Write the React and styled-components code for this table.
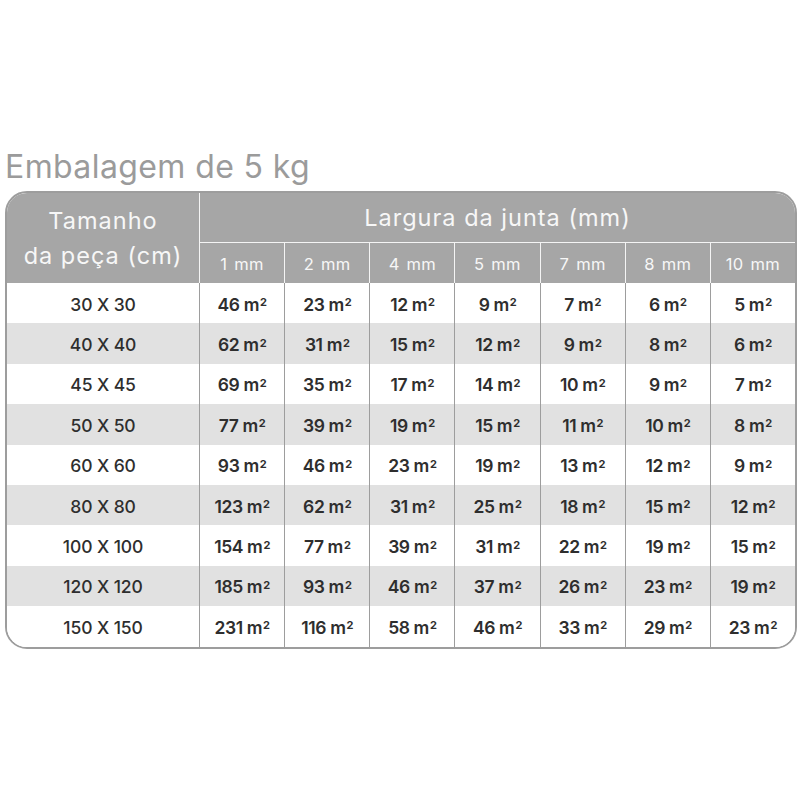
import React from "react";
import styled, { createGlobalStyle } from "styled-components";

const widths = ["1 mm", "2 mm", "4 mm", "5 mm", "7 mm", "8 mm", "10 mm"];

const rows = [
  ["30 X 30", [46, 23, 12, 9, 7, 6, 5]],
  ["40 X 40", [62, 31, 15, 12, 9, 8, 6]],
  ["45 X 45", [69, 35, 17, 14, 10, 9, 7]],
  ["50 X 50", [77, 39, 19, 15, 11, 10, 8]],
  ["60 X 60", [93, 46, 23, 19, 13, 12, 9]],
  ["80 X 80", [123, 62, 31, 25, 18, 15, 12]],
  ["100 X 100", [154, 77, 39, 31, 22, 19, 15]],
  ["120 X 120", [185, 93, 46, 37, 26, 23, 19]],
  ["150 X 150", [231, 116, 58, 46, 33, 29, 23]]
];

const GlobalStyle = createGlobalStyle`
  body {
    margin: 0;
    background: #ffffff;
    font-family: Inter, "Open Sans", sans-serif;
  }
`;

const Page = styled.div`
  width: 800px;
  height: 800px;
  padding: 147px 3px 0 5px;
  box-sizing: border-box;
`;

const Title = styled.h1`
  margin: 0 0 5px 0;
  font-size: 32px;
  line-height: 39px;
  font-weight: 400;
  color: #9b9b9b;
  letter-spacing: 0.4px;
`;

const Table = styled.div`
  display: grid;
  grid-template-columns: 192px repeat(7, 1fr);
  grid-template-rows: 49px 41px repeat(9, 40.4px);
  border: 2px solid #9d9d9d;
  border-radius: 22px;
  overflow: hidden;
  background: #ffffff;
`;

const HeadCell = styled.div`
  background: #a6a6a6;
  color: #f7f7f7;
  display: flex;
  align-items: center;
  justify-content: center;
  text-align: center;
  font-size: ${(p) => (p.$small ? "16.5px" : "23.5px")};
  line-height: 1.5;
  letter-spacing: ${(p) => (p.$small ? "0.3px" : "1px")};
  word-spacing: ${(p) => (p.$small ? "2px" : "0")};
  grid-column: ${(p) => p.$col || "auto"};
  grid-row: ${(p) => p.$row || "auto"};
  border-left: ${(p) => (p.$first ? "none" : "1.5px solid #f4f4f4")};
  border-top: ${(p) => (p.$sub ? "1.5px solid #f4f4f4" : "none")};
  padding-top: ${(p) => (p.$sub ? "2px" : "0")};
`;

const Cell = styled.div`
  background: ${(p) => (p.$stripe ? "#e1e1e1" : "#ffffff")};
  color: #2e2e2e;
  display: flex;
  align-items: center;
  justify-content: center;
  font-size: 17.5px;
  font-weight: ${(p) => (p.$label ? 500 : 600)};
  letter-spacing: ${(p) => (p.$label ? "-0.1px" : "-0.4px")};
  padding-top: 2px;
  border-left: ${(p) => (p.$label ? "none" : "1.5px solid #9d9d9d")};
`;

const Sup = styled.sup`
  font-size: 11px;
  font-weight: 700;
  line-height: 0;
  position: relative;
  top: -2px;
  margin-left: 1px;
`;

export default function App() {
  return (
    <Page>
      <GlobalStyle />
      <Title>Embalagem de 5 kg</Title>
      <Table>
        <HeadCell $first $col="1" $row="1 / span 2">
          Tamanho
          <br />
          da peça (cm)
        </HeadCell>
        <HeadCell $col="2 / span 7" $row="1">
          Largura da junta (mm)
        </HeadCell>
        {widths.map((w) => (
          <HeadCell key={w} $small $sub $row="2">
            {w}
          </HeadCell>
        ))}
        {rows.map(([label, values], i) => (
          <React.Fragment key={label}>
            <Cell $label $stripe={i % 2 === 1}>
              {label}
            </Cell>
            {values.map((v, j) => (
              <Cell key={j} $stripe={i % 2 === 1}>
                {v}&nbsp;m<Sup>2</Sup>
              </Cell>
            ))}
          </React.Fragment>
        ))}
      </Table>
    </Page>
  );
}
